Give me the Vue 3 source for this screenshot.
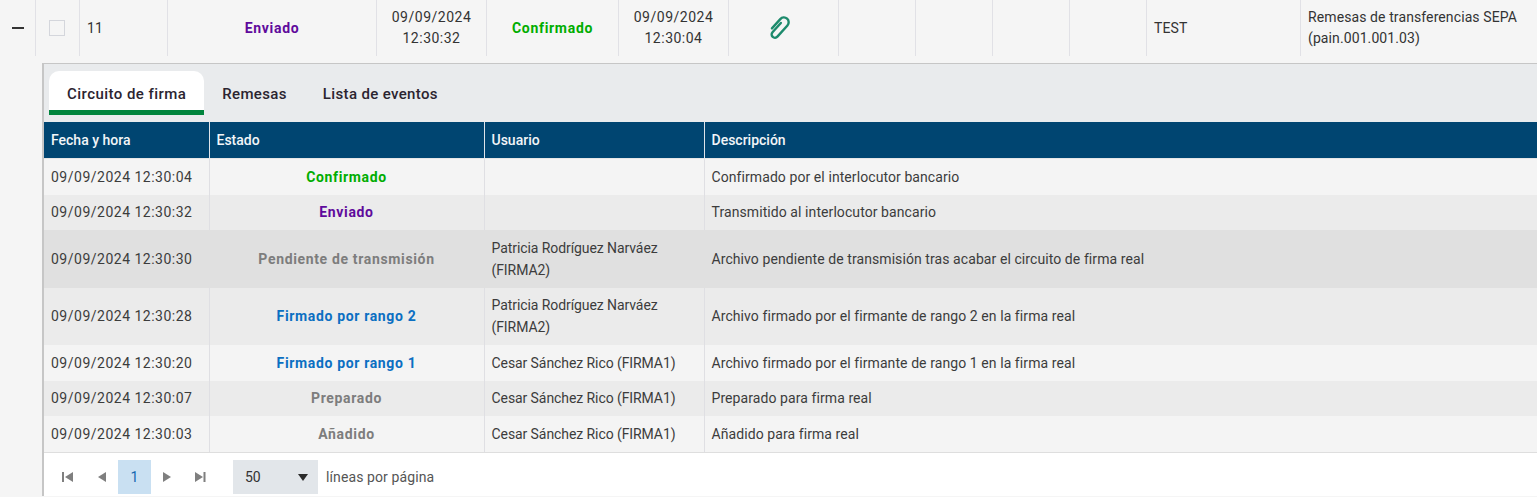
<script setup>
const topCells = [
  { w: 36, cls: 'toggle', text: '' },
  { w: 44, cls: 'check', text: '' },
  { w: 88, cls: 'num', text: '11' },
  { w: 209, cls: 'st sent', text: 'Enviado' },
  { w: 110, cls: 'date', lines: ['09/09/2024', '12:30:32'] },
  { w: 132, cls: 'st ok', text: 'Confirmado' },
  { w: 110, cls: 'date', lines: ['09/09/2024', '12:30:04'] },
  { w: 110, cls: 'clip', text: '' },
  { w: 77 },
  { w: 77 },
  { w: 77 },
  { w: 77 },
  { w: 154, cls: 'num', text: 'TEST' },
  { w: 236, cls: 'desc', lines: ['Remesas de transferencias SEPA', '(pain.001.001.03)'] }
];

const tabs = ['Circuito de firma', 'Remesas', 'Lista de eventos'];

const rows = [
  { date: '09/09/2024 12:30:04', state: 'Confirmado', color: 'ok', user: '', desc: 'Confirmado por el interlocutor bancario' },
  { date: '09/09/2024 12:30:32', state: 'Enviado', color: 'sent', user: '', desc: 'Transmitido al interlocutor bancario' },
  { date: '09/09/2024 12:30:30', state: 'Pendiente de transmisión', color: 'grey', user: 'Patricia Rodríguez Narváez (FIRMA2)', desc: 'Archivo pendiente de transmisión tras acabar el circuito de firma real', hover: true },
  { date: '09/09/2024 12:30:28', state: 'Firmado por rango 2', color: 'blue', user: 'Patricia Rodríguez Narváez (FIRMA2)', desc: 'Archivo firmado por el firmante de rango 2 en la firma real' },
  { date: '09/09/2024 12:30:20', state: 'Firmado por rango 1', color: 'blue', user: 'Cesar Sánchez Rico (FIRMA1)', desc: 'Archivo firmado por el firmante de rango 1 en la firma real' },
  { date: '09/09/2024 12:30:07', state: 'Preparado', color: 'grey', user: 'Cesar Sánchez Rico (FIRMA1)', desc: 'Preparado para firma real' },
  { date: '09/09/2024 12:30:03', state: 'Añadido', color: 'grey', user: 'Cesar Sánchez Rico (FIRMA1)', desc: 'Añadido para firma real' }
];
</script>

<template>
  <div class="page">
    <div class="top-row">
      <div
        v-for="(c, i) in topCells"
        :key="i"
        class="top-cell"
        :class="c.cls"
        :style="{ width: c.w + 'px' }"
      >
        <span v-if="c.cls === 'toggle'" class="minus"></span>
        <span v-else-if="c.cls === 'check'" class="box"></span>
        <svg v-else-if="c.cls === 'clip'" class="clip-icon" width="30" height="30" viewBox="0 0 30 30">
          <g transform="rotate(42 15 15)" fill="none" stroke="#1d8a6c" stroke-width="2.4" stroke-linecap="round">
            <path d="M13 10V22.500a3.300 3.300 0 0 0 6.600 0V7.500a4.800 4.800 0 0 0-9.600 0V20"/>
          </g>
        </svg>
        <template v-else-if="c.lines">
          <div v-for="l in c.lines" :key="l">{{ l }}</div>
        </template>
        <template v-else>{{ c.text }}</template>
      </div>
    </div>

    <div class="panel">
      <div class="tabs">
        <div v-for="(t, i) in tabs" :key="t" class="tab" :class="{ active: i === 0 }">{{ t }}</div>
      </div>

      <table class="grid">
        <colgroup>
          <col class="c1" />
          <col class="c2" />
          <col class="c3" />
          <col />
        </colgroup>
        <thead>
          <tr>
            <th>Fecha y hora</th>
            <th>Estado</th>
            <th>Usuario</th>
            <th>Descripción</th>
          </tr>
        </thead>
        <tbody>
          <tr v-for="r in rows" :key="r.date" :class="{ hover: r.hover }">
            <td class="when">{{ r.date }}</td>
            <td class="state" :class="r.color">{{ r.state }}</td>
            <td class="who">{{ r.user }}</td>
            <td>{{ r.desc }}</td>
          </tr>
        </tbody>
      </table>

      <div class="pager">
        <svg class="nav first" width="11" height="12" viewBox="0 0 11 12"><path d="M0 1h2v10H0zM11 1v10L3 6z" fill="#7f7f7f"/></svg>
        <svg class="nav prev" width="9" height="12" viewBox="0 0 9 12"><path d="M9 1v10L1 6z" fill="#7f7f7f"/></svg>
        <span class="page-no">1</span>
        <svg class="nav next" width="9" height="12" viewBox="0 0 9 12"><path d="M0 1v10l8-5z" fill="#7f7f7f"/></svg>
        <svg class="nav last" width="11" height="12" viewBox="0 0 11 12"><path d="M0 1v10l8-5zM8.500 1h2v10h-2z" fill="#7f7f7f"/></svg>
        <div class="size">
          <span>50</span>
          <i class="caret"></i>
        </div>
        <span class="per-page">líneas por página</span>
      </div>
    </div>
  </div>
</template>

<style>
html, body { margin: 0; background: #f5f5f5; }
</style>

<style scoped>
.page {
  width: 1537px;
  height: 497px;
  overflow: hidden;
  background: #f5f5f5;
  font-family: Roboto, "Liberation Sans", sans-serif;
  font-size: 14px;
  color: #333;
}
.top-row {
  display: flex;
  height: 56px;
  margin-bottom: 7px;
}
.top-cell {
  flex: none;
  box-sizing: border-box;
  height: 56px;
  display: flex;
  flex-direction: column;
  justify-content: center;
  border-right: 1px solid #e1e1e6;
  line-height: 21px;
  letter-spacing: 0.1px;
}
.top-cell:last-child { border-right: 0; }
.toggle, .check, .clip, .st, .date { align-items: center; text-align: center; }
.num, .desc { padding-left: 7px; }
.minus { width: 12px; height: 2px; background: #333; margin-left: 1px; }
.box { width: 14px; height: 14px; border: 1px solid #d4d6dc; background: #f5f5f5; margin-right: 2px; }
.clip-icon { display: block; margin-right: 10px; }
.st { font-weight: 700; letter-spacing: 0.7px; }
.date { letter-spacing: 0.5px; }
.panel {
  margin-left: 42px;
  border-top: 1px solid #c6c6c6;
  border-left: 2px solid #c6c6c6;
  background: #e9ebed;
}
.tabs {
  display: flex;
  height: 58px;
  box-sizing: border-box;
  padding: 7px 0 0 5px;
}
.tab {
  height: 44px;
  box-sizing: border-box;
  padding: 1px 18px 0;
  line-height: 44px;
  font-weight: 500;
  font-size: 15px;
  color: #2b2430;
  letter-spacing: 0.35px;
}
.tab.active {
  background: #fff;
  border-radius: 10px 10px 0 0;
  border-bottom: 5px solid #00843d;
  letter-spacing: 0.45px;
}
.grid {
  width: 100%;
  border-collapse: collapse;
  table-layout: fixed;
}
.c1 { width: 165px; }
.c2 { width: 275px; }
.c3 { width: 220px; }
th {
  height: 36px;
  padding: 0 7px;
  background: #004571;
  color: #f2f5f8;
  font-weight: 500;
  font-size: 14px;
  text-align: left;
  border-right: 1px solid #dfe4ea;
  border-bottom: 1px solid #e6e6e6;
}
th:last-child { border-right: 0; }
td {
  padding: 7.6px 7px 6.1px;
  line-height: 21.9px;
  border-right: 1px solid #dfdfe3;
  color: #3c3c3c;
  letter-spacing: 0.08px;
}
td:last-child { border-right: 0; }
tbody tr:nth-child(odd) { background: #f4f4f4; }
tbody tr:nth-child(even) { background: #ebebeb; }
tbody tr.hover { background: #e0e0e0; }
tbody tr.hover td { border-right-color: #e0e0e0; }
.when { letter-spacing: 0.5px; }
.who { letter-spacing: -0.08px; }
td.state { text-align: center; font-weight: 700; letter-spacing: 0.65px; }
.ok, td.ok { color: #00ad00; }
.sent, td.sent { color: #5f0a9c; }
td.grey { color: #7d7d7d; }
td.blue { color: #0b6fc2; }
.pager {
  display: flex;
  align-items: center;
  height: 44px;
  padding-top: 6px;
  background: #fff;
  border-top: 1px solid #dedede;
  box-sizing: border-box;
}
.nav { display: block; flex: none; }
.first { margin-left: 18px; }
.prev { margin-left: 24px; margin-right: 12px; }
.page-no {
  width: 33px;
  height: 34px;
  line-height: 34px;
  text-align: center;
  background: #c9e0f2;
  color: #1668b0;
}
.next { margin-left: 12px; }
.last { margin-left: 23px; }
.size {
  display: flex;
  align-items: center;
  justify-content: space-between;
  width: 85px;
  height: 34px;
  box-sizing: border-box;
  margin-left: 27px;
  padding: 0 10px 0 12px;
  background: #e2e6ea;
}
.caret {
  width: 0;
  height: 0;
  border-left: 5px solid transparent;
  border-right: 5px solid transparent;
  border-top: 7px solid #2b2b2b;
}
.per-page { margin-left: 8px; color: #555; letter-spacing: 0.1px; }
</style>
